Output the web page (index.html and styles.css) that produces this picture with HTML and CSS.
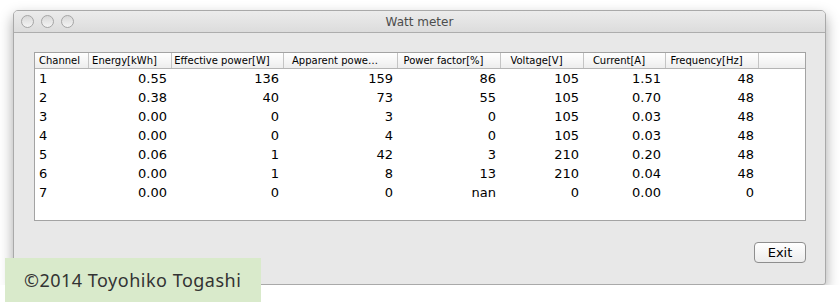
FILE: index.html
```html
<!DOCTYPE html>
<html>
<head>
<title>Watt meter</title>
<link rel="stylesheet" href="styles.css">
</head>
<body>

<div class="window">
  <div class="titlebar">
    <div class="lights">
      <span class="light"></span>
      <span class="light"></span>
      <span class="light"></span>
    </div>
    <div class="title">Watt meter</div>
  </div>

  <div class="content">
    <div class="panel">
      <table class="meter">
        <colgroup>
          <col class="c1"><col class="c2"><col class="c3"><col class="c4">
          <col class="c5"><col class="c6"><col class="c7"><col class="c8"><col>
        </colgroup>
        <thead>
          <tr>
            <th class="first">Channel</th>
            <th>Energy[kWh]</th>
            <th>Effective power[W]</th>
            <th>Apparent powe…</th>
            <th>Power factor[%]</th>
            <th>Voltage[V]</th>
            <th>Current[A]</th>
            <th>Frequency[Hz]</th>
            <th class="last"></th>
          </tr>
        </thead>
        <tbody id="rows"></tbody>
      </table>
    </div>

    <div class="buttons">
      <button class="btn">Exit</button>
    </div>
  </div>
</div>

<div class="credit">©2014 Toyohiko Togashi</div>

<script>
var data = [
  ["1", "0.55", "136", "159", "86", "105", "1.51", "48"],
  ["2", "0.38", "40", "73", "55", "105", "0.70", "48"],
  ["3", "0.00", "0", "3", "0", "105", "0.03", "48"],
  ["4", "0.00", "0", "4", "0", "105", "0.03", "48"],
  ["5", "0.06", "1", "42", "3", "210", "0.20", "48"],
  ["6", "0.00", "1", "8", "13", "210", "0.04", "48"],
  ["7", "0.00", "0", "0", "nan", "0", "0.00", "0"]
]

var text = ""
for (let i = 0; i < data.length; i++) {
  text = text + "<tr>"
  for (let j = 0; j < data[i].length; j++) {
    if (j == 0) {
      text = text + "<td class='ch'>" + data[i][j] + "</td>"
    } else {
      text = text + "<td>" + data[i][j] + "</td>"
    }
  }
  text = text + "<td></td></tr>"
}
document.getElementById('rows').innerHTML = text
</script>
</body>
</html>
```

FILE: styles.css
```css
body {
  margin: 0;
  background: #ffffff;
  padding: 10px 0 0 13px;
  font-family: "DejaVu Sans", sans-serif;
}

.window {
  width: 811px;
  border: 1px solid #a9a9a9;
  border-radius: 5px 5px 3px 3px;
  background: #e8e8e8;
  box-shadow: 0 6px 14px rgba(0, 0, 0, 0.35);
  overflow: hidden;
}

.titlebar {
  height: 21px;
  border-bottom: 1px solid #adadad;
  background: linear-gradient(#ececec, #dcdcdc);
  display: flex;
  align-items: center;
  position: relative;
}

.lights {
  display: flex;
  gap: 7px;
  padding-left: 7px;
}

.light {
  width: 11px;
  height: 11px;
  border: 1px solid #a5a5a5;
  border-radius: 50%;
  background: linear-gradient(#d8d8d8, #f4f4f4);
}

.title {
  position: absolute;
  left: 0;
  right: 0;
  text-align: center;
  font-size: 12px;
  color: #4d4d4d;
}

.content {
  padding: 19px 19px 21px 20px;
}

.panel {
  height: 167px;
  border: 1px solid #a3a3a3;
  background: #ffffff;
}

.meter {
  width: 100%;
  border-collapse: collapse;
  table-layout: fixed;
}

col.c1 { width: 53px; }
col.c2 { width: 83px; }
col.c3 { width: 112px; }
col.c4 { width: 114px; }
col.c5 { width: 103px; }
col.c6 { width: 83px; }
col.c7 { width: 82px; }
col.c8 { width: 93px; }

.meter th {
  height: 15px;
  padding: 0 10px 0 0;
  font-size: 10px;
  font-weight: normal;
  color: #000;
  text-align: center;
  white-space: nowrap;
  overflow: hidden;
  background: linear-gradient(#ffffff, #ededed);
  border-right: 1px solid #c4c4c4;
  border-bottom: 1px solid #b4b4b4;
}

.meter th.first {
  text-align: left;
  padding-left: 4px;
}

.meter th.last {
  border-right: none;
}

.meter td {
  height: 19px;
  padding: 0 4px 0 0;
  font-size: 13px;
  text-align: right;
  color: #000;
}

.meter td.ch {
  text-align: left;
  padding-left: 4px;
}

.buttons {
  display: flex;
  justify-content: flex-end;
  margin-top: 21px;
}

.btn {
  width: 52px;
  height: 21px;
  padding: 0;
  border: 1px solid #8e8e8e;
  border-radius: 4px;
  background: linear-gradient(#ffffff, #ececec);
  font-family: "DejaVu Sans", sans-serif;
  font-size: 13px;
  color: #000;
}

.credit {
  position: absolute;
  left: 5px;
  top: 258px;
  width: 237px;
  height: 44px;
  padding-left: 19px;
  background: #d9eacb;
  font-family: "Noto Sans", sans-serif;
  font-size: 18px;
  letter-spacing: 0.5px;
  color: #333333;
  line-height: 44px;
}
```
